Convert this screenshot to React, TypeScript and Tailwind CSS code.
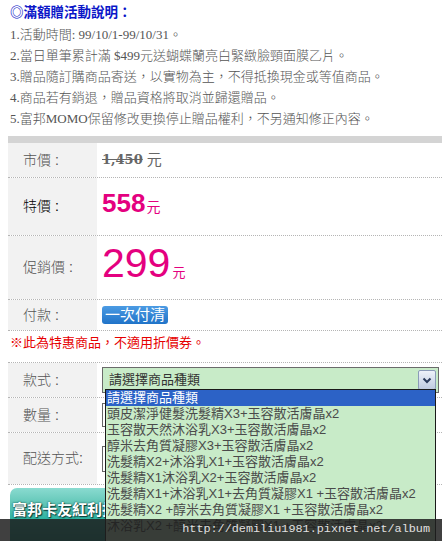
import React from "react";

const cjk = '"Liberation Serif", "Noto Sans CJK TC", serif';
const sans = '"Liberation Sans", "Noto Sans CJK TC", sans-serif';

const items = [
  "請選擇商品種類",
  "頭皮潔淨健髮洗髮精X3+玉容散活膚晶x2",
  "玉容散天然沐浴乳X3+玉容散活膚晶x2",
  "醇米去角質凝膠X3+玉容散活膚晶x2",
  "洗髮精X2+沐浴乳X1+玉容散活膚晶x2",
  "洗髮精X1沐浴乳X2+玉容散活膚晶x2",
  "洗髮精X1+沐浴乳X1+去角質凝膠X1 +玉容散活膚晶x2",
  "洗髮精X2 +醇米去角質凝膠X1 +玉容散活膚晶x2",
  "沐浴乳X2 +醇米去角質凝膠X1 +玉容散活膚晶x2",
];

function Row({
  label,
  h,
  top,
  labelClass = "text-[#555]",
  children,
}: {
  label: string;
  h: string;
  top?: boolean;
  labelClass?: string;
  children?: React.ReactNode;
}) {
  return (
    <div
      className={`flex ${h} border-b border-dotted border-[#b5b5b5] ${
        top ? "border-t" : ""
      }`}
    >
      <div
        className={`w-[89px] shrink-0 bg-[#f2f2f2] pl-[15px] flex items-center text-[14px] font-light ${labelClass}`}
      >
        {label}
      </div>
      <div className="flex-1 pl-[5px] flex items-center">{children}</div>
    </div>
  );
}

export default function App() {
  return (
    <div
      className="relative w-[442px] h-[541px] overflow-hidden bg-white"
      style={{ fontFamily: sans }}
    >
      <div className="pl-[10px] pt-[2px] text-[13px] font-light text-[#555]" style={{ fontFamily: cjk }}>
        <div className="h-[22px] flex items-center font-bold text-[13.5px] text-[#0a16c8]" style={{ fontFamily: sans }}>
          ◎滿額贈活動說明：
        </div>
        <div className="h-[21px] flex items-center">1.活動時間: 99/10/1-99/10/31。</div>
        <div className="h-[21px] flex items-center">2.當日單筆累計滿 $499元送蝴蝶蘭亮白緊緻臉頸面膜乙片。</div>
        <div className="h-[21px] flex items-center">3.贈品隨訂購商品寄送，以實物為主，不得抵換現金或等值商品。</div>
        <div className="h-[21px] flex items-center">4.商品若有銷退，贈品資格將取消並歸還贈品。</div>
        <div className="h-[21px] flex items-center">5.富邦MOMO保留修改更換停止贈品權利，不另通知修正內容。</div>
      </div>

      <div className="ml-[8px] mt-[7px] h-[7px] bg-[#d4d4d4]" />

      <div className="ml-[8px]">
        <Row label="市價 :" h="h-[35px]">
          <span
            className="font-bold line-through text-[13px] text-[#666]"
            style={{ fontFamily: '"DejaVu Serif", serif' }}
          >
            1,450
          </span>
          <span className="ml-[4px] text-[15px] text-[#666]">元</span>
        </Row>
        <Row label="特價 :" h="h-[58px]" labelClass="text-black">
          <div className="flex items-baseline -mt-[6px] text-[#e4007f]">
            <span className="text-[26px] font-bold leading-none" style={{ fontFamily: '"Liberation Sans", sans-serif' }}>
              558
            </span>
            <span className="text-[14px] ml-[1px]">元</span>
          </div>
        </Row>
        <Row label="促銷價 :" h="h-[64px]">
          <div className="flex items-baseline -mt-[8px] text-[#e4007f]">
            <span className="text-[41px] leading-none" style={{ fontFamily: '"Liberation Sans", sans-serif' }}>
              299
            </span>
            <span className="text-[13px] ml-[2px]">元</span>
          </div>
        </Row>
        <Row label="付款 :" h="h-[31px]">
          <div className="h-[18px] w-[66px] rounded-[3px] bg-gradient-to-b from-[#4b9be3] to-[#1f73c8] text-white text-[15px] leading-[18px] text-center">
            一次付清
          </div>
        </Row>
      </div>

      <div className="h-[31px] pl-[10px] text-[13px] leading-[24px] text-[#e60000]">
        ※此為特惠商品，不適用折價券。
      </div>

      <div className="ml-[8px]">
        <Row label="款式 :" h="h-[36px]" top>
          <div className="relative w-[337px] h-[26px] border border-[#6a6a6a] bg-[#c8ebc8] flex items-center pl-[6px] text-[13px] text-[#333]">
            請選擇商品種類
            <div className="absolute right-[2px] top-[2px] w-[18px] h-[20px] border border-[#8a9ab8] rounded-[2px] bg-gradient-to-b from-[#eef2fa] to-[#bfcbe0] flex items-center justify-center">
              <svg width="10" height="7" viewBox="0 0 10 7">
                <path d="M1.5 1.5 L5 5 L8.5 1.5" stroke="#2a3a5a" strokeWidth="2" fill="none" />
              </svg>
            </div>
          </div>
        </Row>
        <Row label="數量 :" h="h-[35px]">
          <div className="w-[60px] h-[24px] border border-[#666] bg-white" />
        </Row>
        <Row label="配送方式:" h="h-[52px]">
          <div className="w-[200px] h-[26px] border border-[#666] bg-white" />
        </Row>
      </div>

      <div className="ml-[10px] mt-[3px] w-[180px] h-[60px] rounded-t-[7px] bg-gradient-to-b from-[#8adbd0] via-[#2fb4a2] to-[#128a7c] pl-[2px] pt-[10px]">
        <span
          className="text-[15px] font-bold text-white"
          style={{ textShadow: "0 0 2px #0b3d38, 1px 1px 1px #0b3d38" }}
        >
          富邦卡友紅利折抵
        </span>
      </div>

      <div className="absolute left-[105px] top-[389px] w-[331px] h-[160px] border border-[#1a1a1a] bg-[#c8ebc8] text-[13px] text-[#4a4a4a]">
        {items.map((t, i) => (
          <div
            key={i}
            className={`h-[16px] leading-[16px] pl-[1px] whitespace-nowrap ${
              i === 0 ? "bg-[#2c62c6] text-white" : ""
            }`}
          >
            {t}
          </div>
        ))}
      </div>

      <div className="absolute left-0 right-0 bottom-0 h-[22px] bg-[#1e1e1e]/85 flex items-center justify-end pr-[12px]">
        <span
          className="text-[11.8px] text-[#e0e0e0]"
          style={{ fontFamily: '"Liberation Mono", monospace' }}
        >
          http://demiliu1981.pixnet.net/album
        </span>
      </div>
    </div>
  );
}
